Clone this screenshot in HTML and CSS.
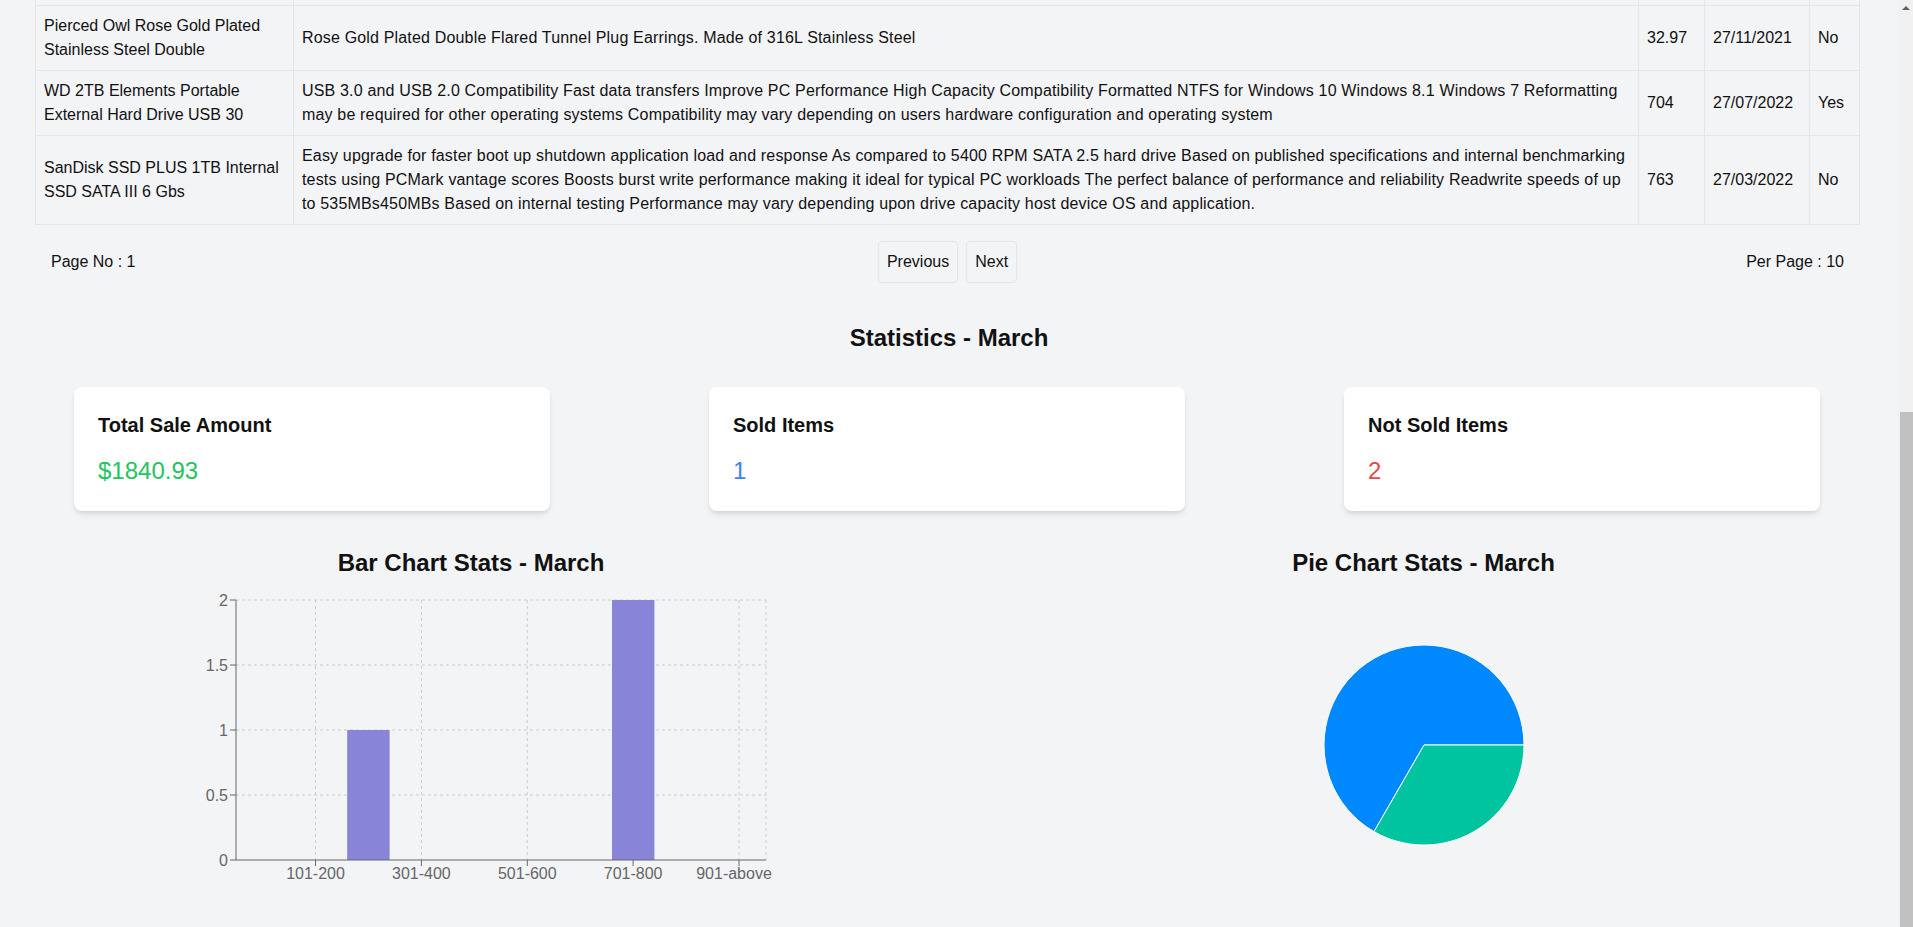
FILE: index.html
```html
<!DOCTYPE html>
<html lang="en">
<head>
<meta charset="utf-8">
<title>Transactions Dashboard</title>
<link rel="stylesheet" href="styles.css">
</head>
<body>
<div class="app">
  <main class="main">
    <section class="table-wrap">
      <table class="tx-table">
        <colgroup>
          <col class="c-title"><col class="c-desc"><col class="c-price"><col class="c-date"><col class="c-sold">
        </colgroup>
        <tbody>
          <tr class="row-prev" aria-hidden="true">
            <td></td><td></td><td></td><td></td><td></td>
          </tr>
          <tr>
            <td>Pierced Owl Rose Gold Plated Stainless Steel Double</td>
            <td class="desc">Rose Gold Plated Double Flared Tunnel Plug Earrings. Made of 316L Stainless Steel</td>
            <td>32.97</td>
            <td>27/11/2021</td>
            <td>No</td>
          </tr>
          <tr>
            <td>WD 2TB Elements Portable External Hard Drive USB 30</td>
            <td class="desc">USB 3.0 and USB 2.0 Compatibility Fast data transfers Improve PC Performance High Capacity Compatibility Formatted NTFS for Windows 10 Windows 8.1 Windows 7 Reformatting may be required for other operating systems Compatibility may vary depending on users hardware configuration and operating system</td>
            <td>704</td>
            <td>27/07/2022</td>
            <td>Yes</td>
          </tr>
          <tr>
            <td>SanDisk SSD PLUS 1TB Internal SSD SATA III 6 Gbs</td>
            <td class="desc">Easy upgrade for faster boot up shutdown application load and response As compared to 5400 RPM SATA 2.5 hard drive Based on published specifications and internal benchmarking tests using PCMark vantage scores Boosts burst write performance making it ideal for typical PC workloads The perfect balance of performance and reliability Readwrite speeds of up to 535MBs450MBs Based on internal testing Performance may vary depending upon drive capacity host device OS and application.</td>
            <td>763</td>
            <td>27/03/2022</td>
            <td>No</td>
          </tr>
        </tbody>
      </table>
    </section>

    <div class="pager">
      <span class="pager-info">Page No : 1</span>
      <div class="pager-buttons">
        <button class="pager-btn" type="button">Previous</button>
        <button class="pager-btn" type="button">Next</button>
      </div>
      <span class="pager-info pager-right">Per Page : 10</span>
    </div>

    <h2 class="stats-title">Statistics - March</h2>

    <div class="cards">
      <div class="card">
        <h3 class="card-title">Total Sale Amount</h3>
        <p class="card-value value-green">$1840.93</p>
      </div>
      <div class="card">
        <h3 class="card-title">Sold Items</h3>
        <p class="card-value value-blue">1</p>
      </div>
      <div class="card">
        <h3 class="card-title">Not Sold Items</h3>
        <p class="card-value value-red">2</p>
      </div>
    </div>

    <div class="charts">
      <div class="chart-col chart-col-left">
        <h2 class="chart-title">Bar Chart Stats - March</h2>
        <svg class="bar-chart" width="600" height="300" viewBox="0 0 600 300">
          <g class="grid">
            <line x1="65" y1="5" x2="595" y2="5"/>
            <line x1="65" y1="70" x2="595" y2="70"/>
            <line x1="65" y1="135" x2="595" y2="135"/>
            <line x1="65" y1="200" x2="595" y2="200"/>
            <line x1="144.5" y1="5" x2="144.5" y2="265"/>
            <line x1="250.4" y1="5" x2="250.4" y2="265"/>
            <line x1="356.3" y1="5" x2="356.3" y2="265"/>
            <line x1="462.1" y1="5" x2="462.1" y2="265"/>
            <line x1="568" y1="5" x2="568" y2="265"/>
            <line x1="595" y1="5" x2="595" y2="265"/>
          </g>
          <rect class="bar" x="176.2" y="135" width="42.4" height="130"/>
          <rect class="bar" x="441" y="5" width="42.4" height="260"/>
          <g class="axis">
            <line x1="65" y1="5" x2="65" y2="265"/>
            <line x1="59" y1="5" x2="65" y2="5"/>
            <line x1="59" y1="70" x2="65" y2="70"/>
            <line x1="59" y1="135" x2="65" y2="135"/>
            <line x1="59" y1="200" x2="65" y2="200"/>
            <line x1="59" y1="265" x2="65" y2="265"/>
            <line x1="65" y1="265" x2="595" y2="265"/>
            <line x1="144.5" y1="265" x2="144.5" y2="271"/>
            <line x1="250.4" y1="265" x2="250.4" y2="271"/>
            <line x1="356.3" y1="265" x2="356.3" y2="271"/>
            <line x1="462.1" y1="265" x2="462.1" y2="271"/>
            <line x1="568" y1="265" x2="568" y2="271"/>
          </g>
          <g class="tick-y">
            <text x="57" y="10.5">2</text>
            <text x="57" y="75.5">1.5</text>
            <text x="57" y="140.5">1</text>
            <text x="57" y="205.5">0.5</text>
            <text x="57" y="270.5">0</text>
          </g>
          <g class="tick-x">
            <text x="144.5" y="284">101-200</text>
            <text x="250.4" y="284">301-400</text>
            <text x="356.3" y="284">501-600</text>
            <text x="462.1" y="284">701-800</text>
            <text x="563" y="284">901-above</text>
          </g>
        </svg>
      </div>
      <div class="chart-col">
        <h2 class="chart-title">Pie Chart Stats - March</h2>
        <svg class="pie-chart" width="400" height="300" viewBox="0 0 400 300">
          <path class="slice-blue" d="M200 150 L300 150 A100 100 0 1 0 150 236.6 Z"/>
          <path class="slice-green" d="M200 150 L150 236.6 A100 100 0 0 0 300 150 Z"/>
        </svg>
      </div>
    </div>
  </main>

  <div class="scrollbar" aria-hidden="true">
    <div class="sb-btn"><span class="sb-arrow"></span></div>
    <div class="sb-gap"></div>
    <div class="sb-thumb"></div>
  </div>
</div>
</body>
</html>
```

FILE: styles.css
```css
* {
  box-sizing: border-box;
}

html, body {
  margin: 0;
  padding: 0;
  height: 100%;
}

body {
  background: #f3f4f6;
  color: #111111;
  font-family: "Liberation Sans", Arial, sans-serif;
  font-size: 16px;
  line-height: 24px;
  overflow: hidden;
}

.app {
  display: flex;
  height: 100vh;
}

.main {
  flex: 1;
  min-width: 0;
  display: flex;
  flex-direction: column;
  justify-content: flex-end;
  overflow: hidden;
}

.main > * {
  flex-shrink: 0;
}

/* ---------- table ---------- */
.table-wrap {
  padding: 0 38px 0 35px;
}

.tx-table {
  width: 100%;
  border-collapse: collapse;
  table-layout: fixed;
}

.c-title { width: 258px; }
.c-desc { width: 1345px; }
.c-price { width: 66px; }
.c-date { width: 105px; }

.tx-table td {
  border: 1px solid #e3e5e8;
  padding: 8px;
  text-align: left;
  vertical-align: middle;
}

.row-prev td {
  height: 41px;
}

.tx-table .desc {
  letter-spacing: 0.17px;
}

/* ---------- pager ---------- */
.pager {
  margin: 16px 38px 0 35px;
  padding: 0 16px;
  display: grid;
  grid-template-columns: 1fr auto 1fr;
  align-items: center;
}

.pager-right {
  justify-self: end;
}

.pager-buttons {
  display: flex;
  gap: 8px;
}

.pager-btn {
  font: inherit;
  color: inherit;
  background: transparent;
  border: 1px solid #e3e5e8;
  border-radius: 4px;
  padding: 8px 8px;
  line-height: 24px;
}

/* ---------- stats ---------- */
.stats-title {
  margin: 39px 0 33px;
  font-size: 24px;
  line-height: 32px;
  font-weight: bold;
  text-align: center;
}

.cards {
  display: grid;
  grid-template-columns: repeat(3, 1fr);
  gap: 159px;
  padding: 0 78px 0 74px;
}

.card {
  background: #ffffff;
  border-radius: 8px;
  padding: 24px;
  box-shadow: 0 4px 6px -1px rgba(0, 0, 0, 0.1), 0 2px 4px -2px rgba(0, 0, 0, 0.1);
}

.card-title {
  margin: 0 0 16px;
  font-size: 20px;
  line-height: 28px;
  font-weight: bold;
}

.card-value {
  margin: 0;
  font-size: 24px;
  line-height: 32px;
}

.value-green { color: #22c55e; }
.value-blue { color: #3b82f6; }
.value-red { color: #ef4444; }

/* ---------- charts ---------- */
.charts {
  display: grid;
  grid-template-columns: 1fr 1fr;
  padding-bottom: 32px;
}

.chart-col {
  display: flex;
  flex-direction: column;
  align-items: center;
}

.chart-col-left {
  padding-right: 7px;
}

.chart-title {
  margin: 36px 0 16px;
  font-size: 24px;
  line-height: 32px;
  font-weight: bold;
}

.bar-chart,
.pie-chart {
  display: block;
  overflow: visible;
}

.grid line {
  stroke: #cccccc;
  stroke-dasharray: 3 3;
  stroke-width: 1;
}

.axis line {
  stroke: #666666;
  stroke-width: 1;
}

.bar {
  fill: #8884d8;
}

.tick-y text,
.tick-x text {
  fill: #666666;
  font-family: "Liberation Sans", Arial, sans-serif;
  font-size: 16px;
}

.tick-y text {
  text-anchor: end;
}

.tick-x text {
  text-anchor: middle;
}

.slice-blue {
  fill: #0088fe;
  stroke: #ffffff;
  stroke-width: 1;
}

.slice-green {
  fill: #00c49f;
  stroke: #ffffff;
  stroke-width: 1;
}

/* ---------- fake window scrollbar ---------- */
.scrollbar {
  width: 15px;
  flex: none;
  display: flex;
  flex-direction: column;
  background: #f1f1f1;
}

.sb-btn {
  height: 15px;
  display: flex;
  align-items: center;
  justify-content: center;
}

.sb-arrow {
  width: 0;
  height: 0;
  border-left: 4px solid transparent;
  border-right: 4px solid transparent;
  border-bottom: 4px solid #606060;
}

.sb-gap {
  height: 397px;
}

.sb-thumb {
  flex: 1;
  margin-left: 2px;
  background: #c1c1c1;
}
```
